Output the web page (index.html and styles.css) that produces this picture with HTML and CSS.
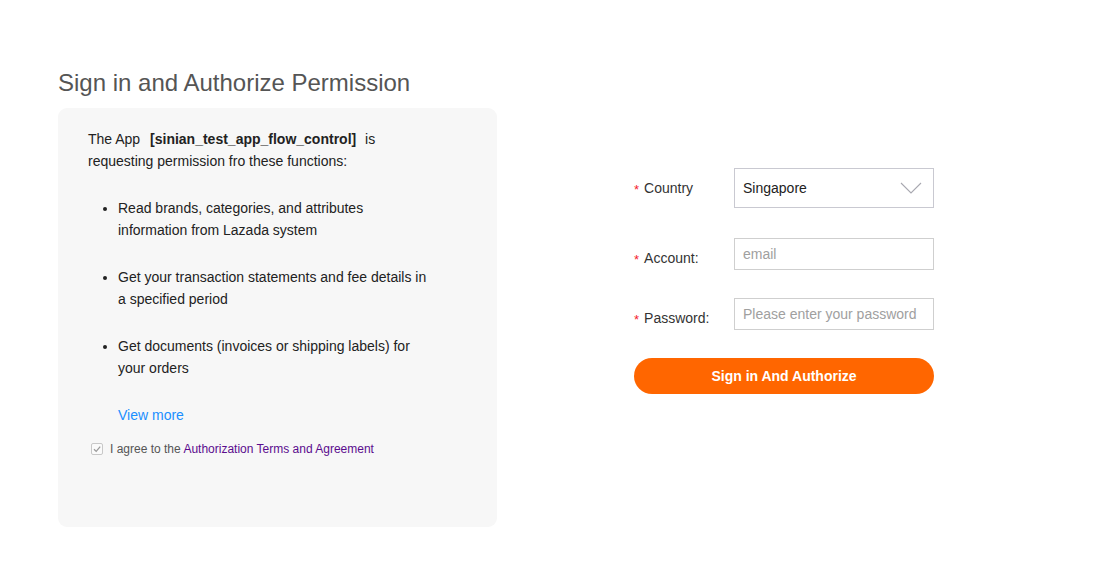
FILE: index.html
```html
<!DOCTYPE html>
<html lang="en">
<head>
<meta charset="utf-8">
<title>Sign in and Authorize Permission</title>
<link rel="stylesheet" href="styles.css">
</head>
<body>
<div class="page">
  <h1 class="title">Sign in and Authorize Permission</h1>
  <div class="main">
    <section class="perm-box">
      <p class="intro">The App <b class="app-name">[sinian_test_app_flow_control]</b> is requesting permission fro these functions:</p>
      <ul class="perm-list">
        <li>Read brands, categories, and attributes information from Lazada system</li>
        <li>Get your transaction statements and fee details in a specified period</li>
        <li>Get documents (invoices or shipping labels) for your orders</li>
      </ul>
      <a class="view-more" href="#">View more</a>
      <div class="agree">
        <span class="checkbox"><svg width="10" height="10" viewBox="0 0 10 10"><path d="M2 5.2 L4.2 7.4 L8.2 2.6" fill="none" stroke="#9a9a9a" stroke-width="1.3"/></svg></span>
        <span class="agree-text">I agree to the <a class="terms" href="#">Authorization Terms and Agreement</a></span>
      </div>
    </section>
    <form class="login-form">
      <div class="row row-first">
        <label class="label"><span class="req">*</span>Country</label>
        <div class="select">
          <span class="select-value">Singapore</span>
          <svg class="chev" width="22" height="12" viewBox="0 0 22 12"><path d="M1 1 L11 11 L21 1" fill="none" stroke="#a8a8b0" stroke-width="1.1"/></svg>
        </div>
      </div>
      <div class="row">
        <label class="label"><span class="req">*</span>Account:</label>
        <input class="input" type="text" placeholder="email">
      </div>
      <div class="row">
        <label class="label"><span class="req">*</span>Password:</label>
        <input class="input" type="password" placeholder="Please enter your password">
      </div>
      <button class="submit" type="button">Sign in And Authorize</button>
    </form>
  </div>
</div>
</body>
</html>
```

FILE: styles.css
```css
* { box-sizing: border-box; }
html, body { margin: 0; padding: 0; background: #fff; }
body {
  font-family: "Liberation Sans", Arial, Helvetica, sans-serif;
  color: #333;
}
.page {
  padding: 68px 0 0 58px;
}
.title {
  margin: 0 0 11px 0;
  font-size: 24px;
  line-height: 29px;
  font-weight: normal;
  color: #555;
}
.main {
  display: flex;
  align-items: flex-start;
  gap: 137px;
}
.perm-box {
  width: 439px;
  height: 419px;
  background: #f7f7f7;
  border-radius: 9px;
  padding: 20px 67px 0 30px;
  font-size: 14px;
  line-height: 22px;
  color: #222;
}
.intro { margin: 0 0 25px 0; }
.app-name { font-weight: bold; padding: 0 5px 0 6px; }
.perm-list {
  margin: 0;
  padding: 0 0 0 30px;
  list-style: disc;
}
.perm-list li { margin-bottom: 25px; }
.view-more {
  display: block;
  margin-left: 30px;
  color: #1a8fff;
  text-decoration: none;
}
.agree {
  display: flex;
  align-items: center;
  margin-top: 14px;
  font-size: 12px;
  line-height: 18px;
  color: #555;
}
.checkbox {
  width: 12px;
  height: 12px;
  margin-left: 3px;
  margin-right: 7px;
  border: 1px solid #c8c8c8;
  border-radius: 2px;
  background: #fafafa;
  display: flex;
  align-items: center;
  justify-content: center;
}
.terms { color: #5b0c8e; text-decoration: none; }
.login-form {
  margin-top: 60px;
  width: 300px;
}
.row {
  display: flex;
  align-items: flex-start;
  height: 40px;
  margin-bottom: 20px;
}
.row-first { margin-bottom: 30px; }
.label {
  width: 100px;
  flex: none;
  line-height: 40px;
  font-size: 14px;
  color: #333;
}
.req {
  color: #f5222d;
  font-size: 13px;
  margin-right: 5px;
  vertical-align: -1px;
}
.select {
  width: 200px;
  height: 40px;
  border: 1px solid #c9c9d1;
  display: flex;
  align-items: center;
  justify-content: space-between;
  padding: 0 11px 0 8px;
  font-size: 14px;
  color: #222;
}
.chev { margin-top: -1px; }
.input {
  width: 200px;
  height: 32px;
  border: 1px solid #cfcfcf;
  padding: 0 8px;
  font-family: inherit;
  font-size: 14px;
  color: #333;
  outline: none;
  background: #fff;
}
.input::placeholder { color: #a0a0a0; }
.submit {
  display: block;
  width: 300px;
  height: 36px;
  border: none;
  border-radius: 18px;
  background: #ff6600;
  color: #fff;
  font-family: inherit;
  font-weight: bold;
  font-size: 14px;
  cursor: pointer;
}
```
